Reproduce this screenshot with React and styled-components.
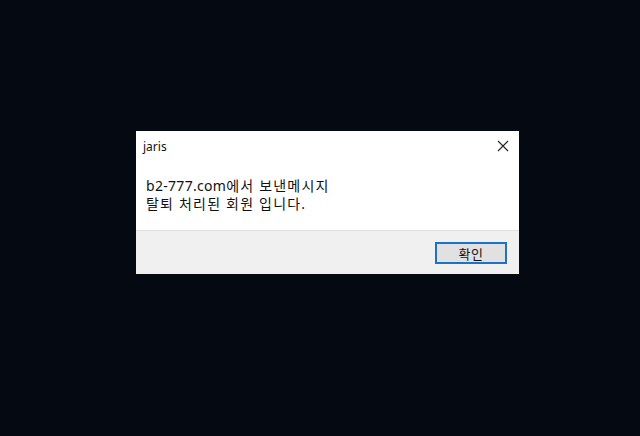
import React from "react";
import styled, { createGlobalStyle } from "styled-components";

const GlobalStyle = createGlobalStyle`
  html, body {
    margin: 0;
    padding: 0;
    background: #050a12;
  }
  body {
    font-family: "Noto Sans", "Noto Sans CJK KR", sans-serif;
  }
`;

const Screen = styled.div`
  width: 640px;
  height: 436px;
  box-sizing: border-box;
  padding: 131px 0 0 136px;
  background: #050a12;
`;

const Dialog = styled.div`
  width: 383px;
  height: 143px;
  background: #ffffff;
  display: flex;
  flex-direction: column;
`;

const TitleBar = styled.div`
  height: 30px;
  display: flex;
  align-items: center;
  justify-content: space-between;
  padding: 0 10px 0 7px;
  box-sizing: border-box;
`;

const Title = styled.span`
  font-size: 12px;
  color: #111;
`;

const Close = styled.svg`
  width: 12px;
  height: 12px;
`;

const Body = styled.div`
  flex: 1;
  padding: 16px 10px 0 10px;
  font-family: "Noto Sans", "Noto Sans CJK KR", sans-serif;
  font-size: 14px;
  line-height: 18px;
  letter-spacing: 1.2px;
  color: #111;
`;

const Latin = styled.span`
  letter-spacing: 0.3px;
`;

const Footer = styled.div`
  height: 44px;
  background: #f0f0f0;
  border-top: 1px solid #dfdfdf;
  box-sizing: border-box;
  display: flex;
  align-items: center;
  justify-content: flex-end;
  padding: 0 12px 0 0;
`;

const Button = styled.button`
  width: 72px;
  height: 22px;
  box-sizing: border-box;
  border: 2px solid #1a73c8;
  background: #e1e1e1;
  font-family: "Noto Sans CJK KR", sans-serif;
  font-size: 13px;
  letter-spacing: 0.5px;
  color: #111;
  padding: 0;
`;

export default function App() {
  return (
    <>
      <GlobalStyle />
      <Screen>
        <Dialog>
          <TitleBar>
            <Title>jaris</Title>
            <Close viewBox="0 0 12 12">
              <path d="M1 1 L11 11 M11 1 L1 11" stroke="#222" strokeWidth="1.1" />
            </Close>
          </TitleBar>
          <Body>
            <Latin>b2-777.com</Latin>에서 보낸메시지
            <br />
            탈퇴 처리된 회원 입니다.
          </Body>
          <Footer>
            <Button>확인</Button>
          </Footer>
        </Dialog>
      </Screen>
    </>
  );
}
